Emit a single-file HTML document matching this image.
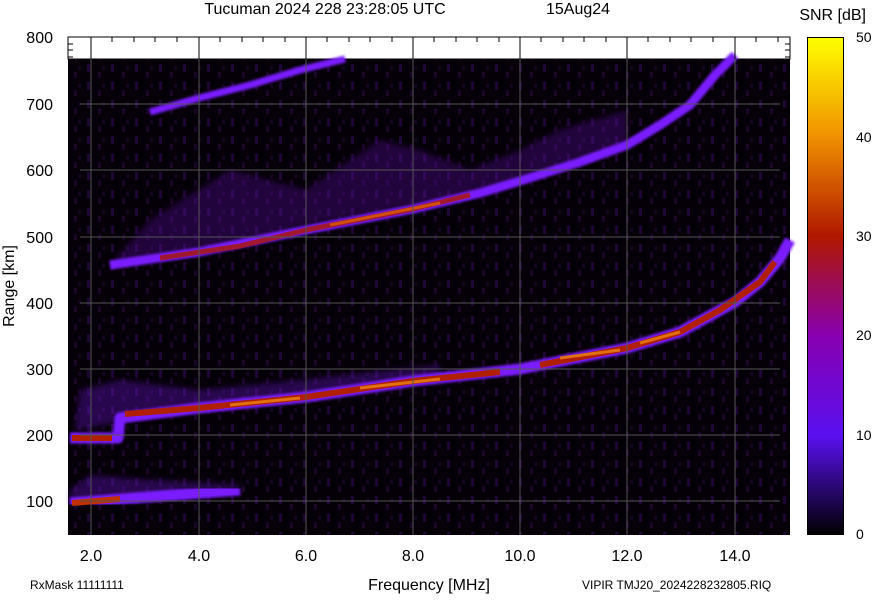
<!DOCTYPE html>
<html><head><meta charset="utf-8"><style>
body{margin:0;width:874px;height:595px;background:#fff;overflow:hidden;font-family:"Liberation Sans",sans-serif;}
</style></head><body>
<svg width="874" height="595" xmlns="http://www.w3.org/2000/svg" font-family="Liberation Sans, sans-serif">
<defs>
<linearGradient id="cb" x1="0" y1="0" x2="0" y2="1">
<stop offset="0" stop-color="#ffff00"/>
<stop offset="0.2" stop-color="#f09000"/>
<stop offset="0.4" stop-color="#b01800"/>
<stop offset="0.6" stop-color="#8800b0"/>
<stop offset="0.8" stop-color="#5a10f0"/>
<stop offset="1" stop-color="#000000"/>
</linearGradient>
<filter id="bl"><feGaussianBlur stdDeviation="3"/></filter>
<filter id="bl2"><feGaussianBlur stdDeviation="1.2"/></filter>
<pattern id="nz" width="24" height="18" patternUnits="userSpaceOnUse">
<rect width="24" height="18" fill="#050008"/>
<rect x="2" y="0" width="3" height="6" fill="#1a0528"/>
<rect x="15" y="10" width="3" height="8" fill="#200636"/>
<rect x="6" y="12" width="3" height="4" fill="#14041f"/>
</pattern>
</defs>
<text x="325" y="14" font-size="16" text-anchor="middle">Tucuman 2024 228 23:28:05 UTC</text>
<text x="578" y="14" font-size="16" text-anchor="middle">15Aug24</text>
<rect x="68" y="37" width="722" height="22" fill="#fff" stroke="#000"/>
<rect x="68" y="59" width="722" height="476" fill="url(#nz)"/>
<g filter="url(#bl)" opacity="0.35">
<path d="M110 265 L199 250 L306 225 L413 205 L500 190 L520 180 L560 165 L627 145 L627 110 L560 130 L520 150 L470 170 L420 150 L380 140 L306 190 L230 170 L150 220 Z" fill="#5a10a0"/>
<path d="M75 430 L200 408 L306 395 L440 375 L440 365 L300 380 L200 390 L120 380 L80 390 Z" fill="#6a18d0"/>
<path d="M70 505 L240 492 L240 485 L150 480 L90 475 L70 490 Z" fill="#6a18d0"/>
</g>
<g fill="none" stroke-linecap="butt" stroke-linejoin="round">
<path stroke="#7a1cff" stroke-width="11" filter="url(#bl2)" d="M70,438 L118,438 L120,418 L199,408 L306,397 L413,381 L520,369 L627,348 L680,332 L735,302 L760,282 L780,258 L790,240"/>
<path stroke="#b02000" stroke-width="6" d="M72,438 L112,438 M125,414 L199,408 L306,397 L413,381 L500,372 M540,365 L627,348 L680,332 L720,310 L760,282 L775,262"/>
<path stroke="#e07010" stroke-width="3" d="M230,405 L300,398 M360,388 L440,379 M560,358 L620,350 M640,343 L680,332"/>
<path stroke="#7a1cff" stroke-width="9" filter="url(#bl2)" d="M110,265 L199,252 L306,230 L413,209 L480,193 L520,181 L580,162 L627,145 L660,125 L690,105 L715,75 L735,55"/>
<path stroke="#a01830" stroke-width="5" d="M160,258 L240,246 L306,230 L413,209 L470,195"/>
<path stroke="#d05010" stroke-width="3" d="M330,225 L440,203"/>
<path stroke="#7a1cff" stroke-width="7" filter="url(#bl2)" d="M150,112 L199,98 L250,85 L300,70 L345,59"/>
<path stroke="#7a1cff" stroke-width="11" filter="url(#bl2)" d="M70,503 L240,490"/>
<path stroke="#c03000" stroke-width="6" d="M72,503 L120,499"/>
</g>
<g stroke="#555" stroke-width="1">
<line x1="91" y1="37" x2="91" y2="535"/><line x1="199" y1="37" x2="199" y2="535"/>
<line x1="306" y1="37" x2="306" y2="535"/><line x1="413" y1="37" x2="413" y2="535"/>
<line x1="520" y1="37" x2="520" y2="535"/><line x1="627" y1="37" x2="627" y2="535"/>
<line x1="735" y1="37" x2="735" y2="535"/>
<line x1="80" y1="104" x2="780" y2="104"/><line x1="80" y1="170" x2="780" y2="170"/>
<line x1="80" y1="237" x2="780" y2="237"/><line x1="80" y1="303" x2="780" y2="303"/>
<line x1="80" y1="369" x2="780" y2="369"/><line x1="80" y1="435" x2="780" y2="435"/>
<line x1="80" y1="501" x2="780" y2="501"/>
</g>
<g stroke="#000" stroke-width="1">
<path d="M91 37v22M199 37v22M306 37v22M413 37v22M520 37v22M627 37v22M735 37v22"/>
<path d="M112 37v5M134 37v5M155 37v5M177 37v5M220 37v5M242 37v5M263 37v5M285 37v5M327 37v5M349 37v5M370 37v5M392 37v5M434 37v5M456 37v5M477 37v5M499 37v5M541 37v5M563 37v5M584 37v5M606 37v5M648 37v5M670 37v5M691 37v5M713 37v5M756 37v5M778 37v5"/>
<path d="M68 44h5M68 50h5M68 57h5M790 44h-5M790 50h-5M790 57h-5"/>
</g>
<g font-size="16" text-anchor="end">
<text x="53" y="43">800</text><text x="53" y="110">700</text><text x="53" y="176">600</text>
<text x="53" y="243">500</text><text x="53" y="309">400</text><text x="53" y="375">300</text>
<text x="53" y="441">200</text><text x="53" y="507">100</text>
</g>
<text transform="translate(14,286) rotate(-90)" font-size="16" text-anchor="middle">Range [km]</text>
<g font-size="16" text-anchor="middle">
<text x="91" y="561">2.0</text><text x="199" y="561">4.0</text><text x="306" y="561">6.0</text>
<text x="413" y="561">8.0</text><text x="520" y="561">10.0</text><text x="627" y="561">12.0</text>
<text x="735" y="561">14.0</text>
</g>
<text x="429" y="590" font-size="16" text-anchor="middle">Frequency [MHz]</text>
<text x="30" y="589" font-size="12">RxMask 11111111</text>
<text x="582" y="589" font-size="12">VIPIR  TMJ20_2024228232805.RIQ</text>
<text x="866" y="20" font-size="16" text-anchor="end">SNR [dB]</text>
<rect x="807.5" y="37.5" width="36" height="497" fill="url(#cb)" stroke="#000"/>
<g font-size="14">
<text x="856" y="42">50</text><text x="856" y="142">40</text><text x="856" y="241">30</text>
<text x="856" y="340">20</text><text x="856" y="440">10</text><text x="856" y="539">0</text>
</g>
</svg>
</body></html>
